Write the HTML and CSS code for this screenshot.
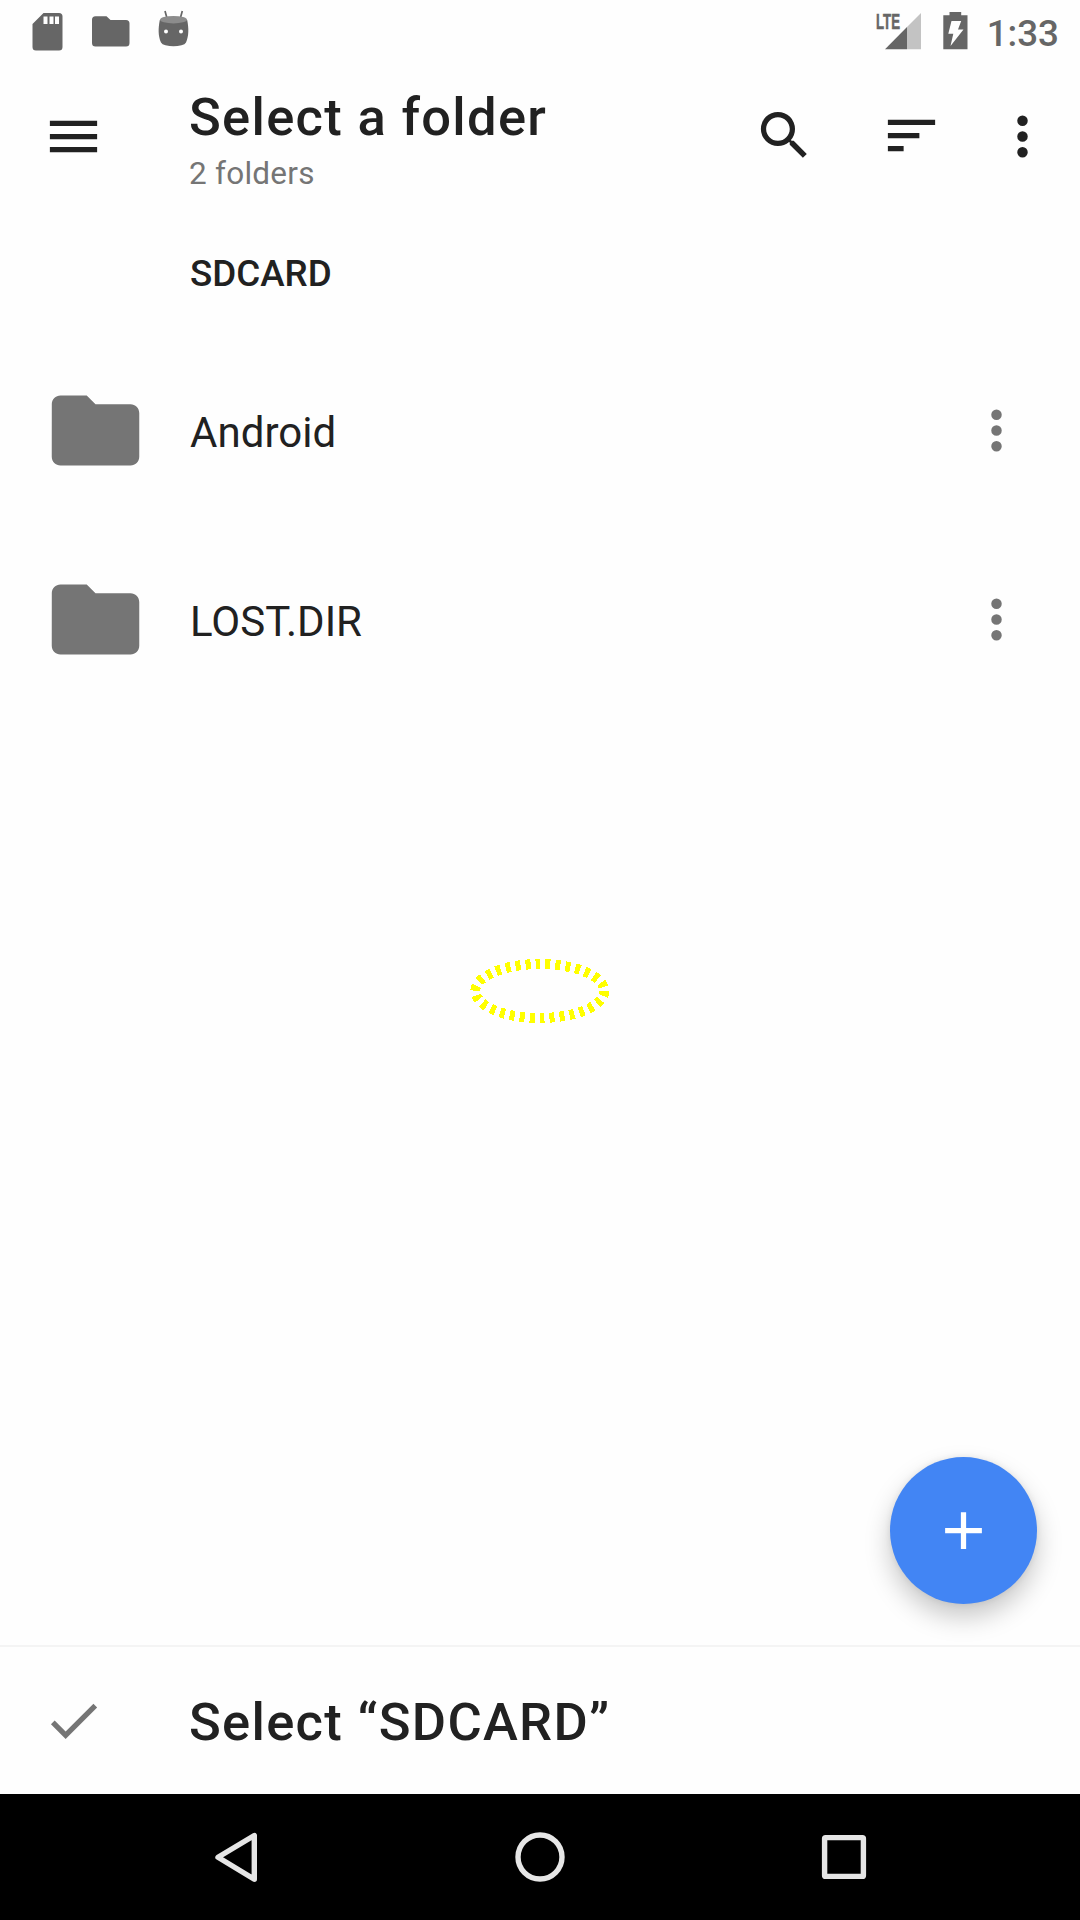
FILE: index.html
```html
<!DOCTYPE html>
<html lang="en">
<head>
<meta charset="utf-8">
<title>Select a folder</title>
<link rel="stylesheet" href="styles.css">
</head>
<body>
<div class="screen">
  <header class="status-bar">
    <svg class="status-left" width="168" height="63" viewBox="30 0 168 63">
      <path fill="#666" fill-rule="evenodd" d="M43.500 13H59a3.500 3.500 0 0 1 3.500 3.500V47a3.500 3.500 0 0 1-3.500 3.500H36a3.500 3.500 0 0 1-3.500-3.500V24zM43.500 16.500V24h4v-7.500zM49.500 16.500V24h4v-7.500zM55 16.500V24h4v-7.500z"/>
      <path fill="#666" d="M95.500 16.300H106.500l4 3.700H126a3.500 3.500 0 0 1 3.500 3.500V43a3.500 3.500 0 0 1-3.500 3.500H95.500A3.500 3.500 0 0 1 92 43V19.800a3.500 3.500 0 0 1 3.500-3.500z"/>
      <path stroke="#666" stroke-width="1.700" d="M165 11l2.200 8M182.300 11l-2.200 8"/>
      <path fill="#666" d="M159.800 20C158.200 28 158 36 161 42.500Q162 44.500 165.500 45.300Q173.500 47.300 181.500 45.300Q185 44.500 186 42.500C189 36 188.800 28 187.200 20z"/>
      <ellipse cx="173.500" cy="19.700" rx="13.500" ry="3.700" fill="#8c8c8c"/>
      <circle cx="166" cy="31.500" r="2" fill="#fff"/><circle cx="181" cy="31.500" r="2" fill="#fff"/>
    </svg>
    <div class="status-right">
      <svg width="96" height="63" viewBox="874 0 96 63">
        <path fill="#c3c3c3" d="M921 13V49.300H907V27z"/>
        <path fill="#666" d="M907 27V49.300H885z"/>
        <text class="lte" x="876" y="29" textLength="24" lengthAdjust="spacingAndGlyphs">LTE</text>
        <path fill="#666" d="M949.500 12h11.700v3.300h6.300v34h-24.200v-34h6.200z"/>
        <path fill="#fff" d="M951.500 21h9.700l-3.200 8.500h5.500L950.500 46l2.800-12.300h-5z"/>
      </svg>
      <span class="clock">1:33</span>
    </div>
  </header>

  <div class="app-bar">
    <svg class="icon" viewBox="0 0 24 24"><path d="M3 18h18v-2H3v2zm0-5h18v-2H3v2zm0-7v2h18V6H3z"/></svg>
    <div class="titles">
      <h1 class="title">Select a folder</h1>
      <p class="subtitle">2 folders</p>
    </div>
    <div class="actions">
      <svg class="icon" viewBox="0 0 24 24"><path d="M15.500 14h-.79l-.28-.27A6.471 6.471 0 0 0 16 9.500 6.500 6.500 0 1 0 9.500 16c1.610 0 3.090-.59 4.230-1.570l.27.28v.79l5 4.990L20.490 19l-4.990-5zm-6 0C7.010 14 5 11.990 5 9.500S7.010 5 9.500 5 14 7.010 14 9.500 11.990 14 9.500 14z"/></svg>
      <svg class="icon" viewBox="0 0 24 24"><path d="M3 18h6v-2H3v2zM3 6v2h18V6H3zm0 7h12v-2H3v2z"/></svg>
      <svg class="icon" viewBox="0 0 24 24"><path d="M12 8a2 2 0 1 0 0-4 2 2 0 0 0 0 4zm0 2a2 2 0 1 0 0 4 2 2 0 0 0 0-4zm0 6a2 2 0 1 0 0 4 2 2 0 0 0 0-4z"/></svg>
    </div>
  </div>

  <main class="content">
    <h2 class="section">SDCARD</h2>
    <ul class="folders">
      <li class="folder">
        <svg class="folder-icon" viewBox="0 0 24 24"><path d="M10 4H4c-1.100 0-1.990.9-1.990 2L2 18c0 1.100.9 2 2 2h16c1.100 0 2-.9 2-2V8c0-1.100-.9-2-2-2h-8l-2-2z"/></svg>
        <span class="name">Android</span>
        <svg class="icon muted" viewBox="0 0 24 24"><path d="M12 8a2 2 0 1 0 0-4 2 2 0 0 0 0 4zm0 2a2 2 0 1 0 0 4 2 2 0 0 0 0-4zm0 6a2 2 0 1 0 0 4 2 2 0 0 0 0-4z"/></svg>
      </li>
      <li class="folder">
        <svg class="folder-icon" viewBox="0 0 24 24"><path d="M10 4H4c-1.100 0-1.990.9-1.990 2L2 18c0 1.100.9 2 2 2h16c1.100 0 2-.9 2-2V8c0-1.100-.9-2-2-2h-8l-2-2z"/></svg>
        <span class="name">LOST.DIR</span>
        <svg class="icon muted" viewBox="0 0 24 24"><path d="M12 8a2 2 0 1 0 0-4 2 2 0 0 0 0 4zm0 2a2 2 0 1 0 0 4 2 2 0 0 0 0-4zm0 6a2 2 0 1 0 0 4 2 2 0 0 0 0-4z"/></svg>
      </li>
    </ul>
    <div class="fab">
      <svg class="icon" viewBox="0 0 24 24"><path d="M19 13h-6v6h-2v-6H5v-2h6V5h2v6h6z"/></svg>
    </div>
  </main>

  <footer class="select-bar">
    <svg class="icon muted" viewBox="0 0 24 24"><path d="M9 16.170L4.830 12l-1.420 1.410L9 19 21 7l-1.410-1.410z"/></svg>
    <span class="select-label">Select “SDCARD”</span>
  </footer>

  <nav class="nav-bar">
    <svg width="60" height="60" viewBox="0 0 60 60"><path d="M12 30.300L48.300 8.500V52.200z"/></svg>
    <svg width="60" height="60" viewBox="0 0 60 60"><circle cx="30" cy="30" r="22"/></svg>
    <svg width="60" height="60" viewBox="0 0 60 60"><rect x="10.600" y="10.600" width="38.800" height="38.800" rx="1"/></svg>
  </nav>

  <svg class="marker" width="142" height="66" viewBox="469 958 142 66"><ellipse cx="539.800" cy="991" rx="64.500" ry="27"/></svg>
</div>
</body>
</html>
```
FILE: styles.css
```css
* { box-sizing: border-box; margin: 0; padding: 0; }

body { background: #fefefe; font-family: Roboto, sans-serif; color: #212121; }

svg { display: block; flex: none; }

.screen {
  position: relative;
  display: flex;
  flex-direction: column;
  width: 1080px;
  height: 1920px;
  overflow: hidden;
}

.status-bar {
  display: flex;
  justify-content: space-between;
  height: 63px;
  padding: 0 21px 0 30px;
}

.status-right { display: flex; gap: 17px; }

.lte { font: bold 22.5px "Liberation Sans Narrow", "Liberation Sans", sans-serif; fill: #666; stroke: #666; stroke-width: 0.6; }

.clock { font-size: 36.75px; font-weight: 500; line-height: 67px; color: #666; }

.icon { width: 63px; height: 63px; fill: #212121; }
.muted { fill: #757575; }

.app-bar {
  display: flex;
  align-items: center;
  height: 147px;
  padding: 0 26px 0 42px;
}

.titles { flex: 1; margin-left: 84px; padding-top: 12px; }
.title { font-size: 52.5px; font-weight: 500; line-height: 62px; letter-spacing: 1.3px; }
.subtitle { font-size: 31.5px; line-height: 52px; letter-spacing: 0.25px; color: #757575; }

.actions { display: flex; }
.actions .icon:first-child { margin-top: -1px; }
.actions .icon:nth-child(2) { margin: -1px 48px 0 64px; }

.content { flex: 1; display: flex; flex-direction: column; }

.section {
  height: 126px;
  padding-left: 190px;
  font-size: 36.75px;
  font-weight: 500;
  line-height: 128px;
}

.folders { list-style: none; }

.folder {
  display: flex;
  align-items: center;
  height: 189px;
  padding: 0 52px 0 43px;
}

.folder-icon { width: 105px; height: 105px; fill: #757575; }
.name { flex: 1; margin-left: 42px; padding-top: 4px; font-size: 42px; line-height: 50px; letter-spacing: 0.05px; }

.fab {
  display: flex;
  align-items: center;
  justify-content: center;
  align-self: flex-end;
  width: 147px;
  height: 147px;
  margin: auto 43px 41px 0;
  border-radius: 50%;
  background: #4285f4;
  box-shadow: 0 13px 26px rgba(0, 0, 0, 0.22), 0 0 6px rgba(0, 0, 0, 0.08);
}
.fab .icon { fill: #fff; }

.select-bar {
  display: flex;
  align-items: center;
  height: 149px;
  padding: 0 0 1px 42px;
  border-top: 2px solid #f4f4f4;
}
.select-label {
  margin-left: 84px;
  padding-top: 4px;
  font-size: 52.5px;
  font-weight: 500;
  line-height: 62px;
  letter-spacing: 1.3px;
}

.nav-bar {
  display: flex;
  align-items: center;
  justify-content: space-between;
  height: 126px;
  padding: 0 206px;
  background: #000;
}
.nav-bar svg { fill: none; stroke: #e6e6e6; stroke-width: 5.4; stroke-linejoin: round; }

/* Dashed touch marker drawn over the screen centre */
.marker {
  position: absolute;
  left: 469px;
  top: 958px;
  fill: none;
  stroke: #ff0;
  stroke-width: 10;
  stroke-dasharray: 5 5;
  shape-rendering: crispEdges;
}
```
